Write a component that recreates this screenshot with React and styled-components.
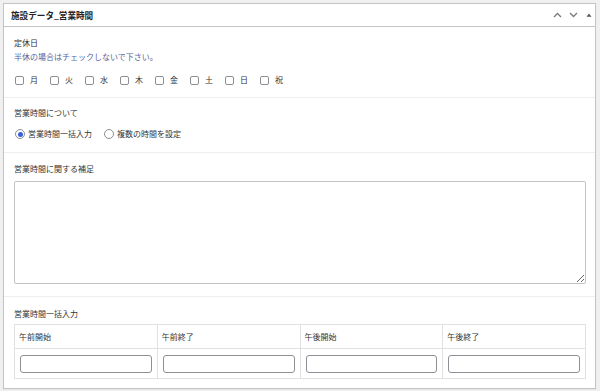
import React from 'react'
import styled, { createGlobalStyle } from 'styled-components';

const GlobalStyle = createGlobalStyle`
    html, body {
        margin: 0;
        padding: 0;
        background: #f0f0f1;
        font-family: "Noto Sans CJK JP", "Noto Sans", "Liberation Sans", sans-serif;
        color: #3c434a;
    }
`;

const Page = styled.div`
    padding: 3px 4px 4px 3px;
`;

const Panel = styled.div`
    background: #fff;
    border: 1px solid #c3c4c7;
    box-shadow: 0 1px 1px rgba(0, 0, 0, 0.04);
`;

const Header = styled.div`
    height: 22px;
    display: flex;
    align-items: center;
    justify-content: space-between;
    padding-left: 7px;
    border-bottom: 1px solid #c3c4c7;
`;

const Title = styled.h2`
    margin: 0;
    font-size: 8.6px;
    font-weight: 700;
    color: #1d2327;
    line-height: 12px;
`;

const Handles = styled.div`
    display: flex;
    align-items: center;
    gap: 4px;
    height: 100%;
`;

const HandleButton = styled.button`
    width: 12px;
    height: 100%;
    padding: 0;
    border: none;
    background: none;
    display: flex;
    align-items: center;
    justify-content: center;
    cursor: pointer;
`;

const Field = styled.div`
    padding: ${p => p.$pad || '10px 9px 11px 10px'};
    border-top: ${p => p.$first ? 'none' : '1px solid #eeeeee'};
`;

const Label = styled.div`
    font-size: 8px;
    line-height: 12px;
    color: #333;
    margin-bottom: ${p => p.$gap || 0}px;
`;

const Note = styled.p`
    margin: 0;
    font-size: 8px;
    line-height: 12px;
    color: #5b5f9c;
`;

const Choices = styled.ul`
    list-style: none;
    margin: ${p => p.$top || 0}px 0 0 1px;
    padding: 0;
    display: flex;
    align-items: center;
`;

const Choice = styled.li`
    display: flex;
    align-items: center;
    margin-right: ${p => p.$space}px;
    font-size: 8px;
    line-height: 12px;
    color: #333;
`;

const CheckBox = styled.input.attrs({ type: 'checkbox' })`
    appearance: none;
    margin: 0 ${p => p.$gap}px 0 0;
    width: 9px;
    height: 9px;
    border: 1px solid #8c8f94;
    border-radius: 2px;
    background: #fff;
    box-sizing: border-box;
`;

const Radio = styled.input.attrs({ type: 'radio' })`
    appearance: none;
    margin: 0 3px 0 0;
    width: 10px;
    height: 10px;
    border: 1px solid #8c8f94;
    border-radius: 50%;
    background: #fff;
    box-sizing: border-box;
    position: relative;

    &:checked::before {
        content: '';
        position: absolute;
        left: 1.5px;
        top: 1.5px;
        width: 5px;
        height: 5px;
        border-radius: 50%;
        background: #3a5fd9;
    }
`;

const TextArea = styled.textarea`
    display: block;
    width: 100%;
    height: 103px;
    box-sizing: border-box;
    border: 1px solid #c3c3c3;
    border-radius: 2px;
    resize: vertical;
    font-family: inherit;
    font-size: 8px;
    margin: 0;
`;

const Table = styled.table`
    width: calc(100% - 1px);
    border-collapse: collapse;
    table-layout: fixed;
    border: 1px solid #e1e1e1;
`;

const Th = styled.th`
    height: 23px;
    padding: 0 4px;
    text-align: left;
    font-size: 8px;
    font-weight: 400;
    color: #333;
    border: 1px solid #e1e1e1;
`;

const Td = styled.td`
    height: 29px;
    padding: 0 5px;
    border: 1px solid #e1e1e1;
`;

const TimeInput = styled.input.attrs({ type: 'text' })`
    display: block;
    width: 100%;
    height: 18px;
    box-sizing: border-box;
    border: 1px solid #8c8f94;
    border-radius: 3px;
    background: #fff;
    margin: 0;
`;

const Chevron = ({ up }) => (
    <svg width="9" height="6" viewBox="0 0 9 6">
        <path
            d={up ? 'M1 5 L4.5 1.5 L8 5' : 'M1 1 L4.5 4.5 L8 1'}
            fill="none"
            stroke="#787c82"
            strokeWidth="1.4"
        />
    </svg>
);

const Triangle = () => (
    <svg width="6" height="4" viewBox="0 0 6 4">
        <path d="M0.5 3.8 L3 0.5 L5.5 3.8 Z" fill="#50575e" />
    </svg>
);

const days = ['月', '火', '水', '木', '金', '土', '日', '祝'];
const columns = ['午前開始', '午前終了', '午後開始', '午後終了'];

export default function App() {
    return (
        <Page>
            <GlobalStyle />
            <Panel>
                <Header>
                    <Title>施設データ_営業時間</Title>
                    <Handles>
                        <HandleButton><Chevron up /></HandleButton>
                        <HandleButton><Chevron /></HandleButton>
                        <HandleButton><Triangle /></HandleButton>
                    </Handles>
                </Header>

                <Field $first $pad="10px 9px 11px 10px">
                    <Label $gap={2}>定休日</Label>
                    <Note>半休の場合はチェックしないで下さい。</Note>
                    <Choices $top={11}>
                        {days.map(d => (
                            <Choice key={d} $space={12}>
                                <CheckBox $gap={6} />
                                {d}
                            </Choice>
                        ))}
                    </Choices>
                </Field>

                <Field $pad="9px 9px 12px 10px">
                    <Label $gap={9}>営業時間について</Label>
                    <Choices>
                        <Choice $space={12}>
                            <Radio name="mode" defaultChecked />
                            営業時間一括入力
                        </Choice>
                        <Choice $space={12}>
                            <Radio name="mode" />
                            複数の時間を設定
                        </Choice>
                    </Choices>
                </Field>

                <Field $pad="10px 9px 12px 10px">
                    <Label $gap={6}>営業時間に関する補足</Label>
                    <TextArea />
                </Field>

                <Field $pad="11px 8px 9px 10px">
                    <Label $gap={4}>営業時間一括入力</Label>
                    <Table>
                        <thead>
                            <tr>
                                {columns.map(c => <Th key={c}>{c}</Th>)}
                            </tr>
                        </thead>
                        <tbody>
                            <tr>
                                {columns.map(c => (
                                    <Td key={c}><TimeInput /></Td>
                                ))}
                            </tr>
                        </tbody>
                    </Table>
                </Field>
            </Panel>
        </Page>
    );
}
